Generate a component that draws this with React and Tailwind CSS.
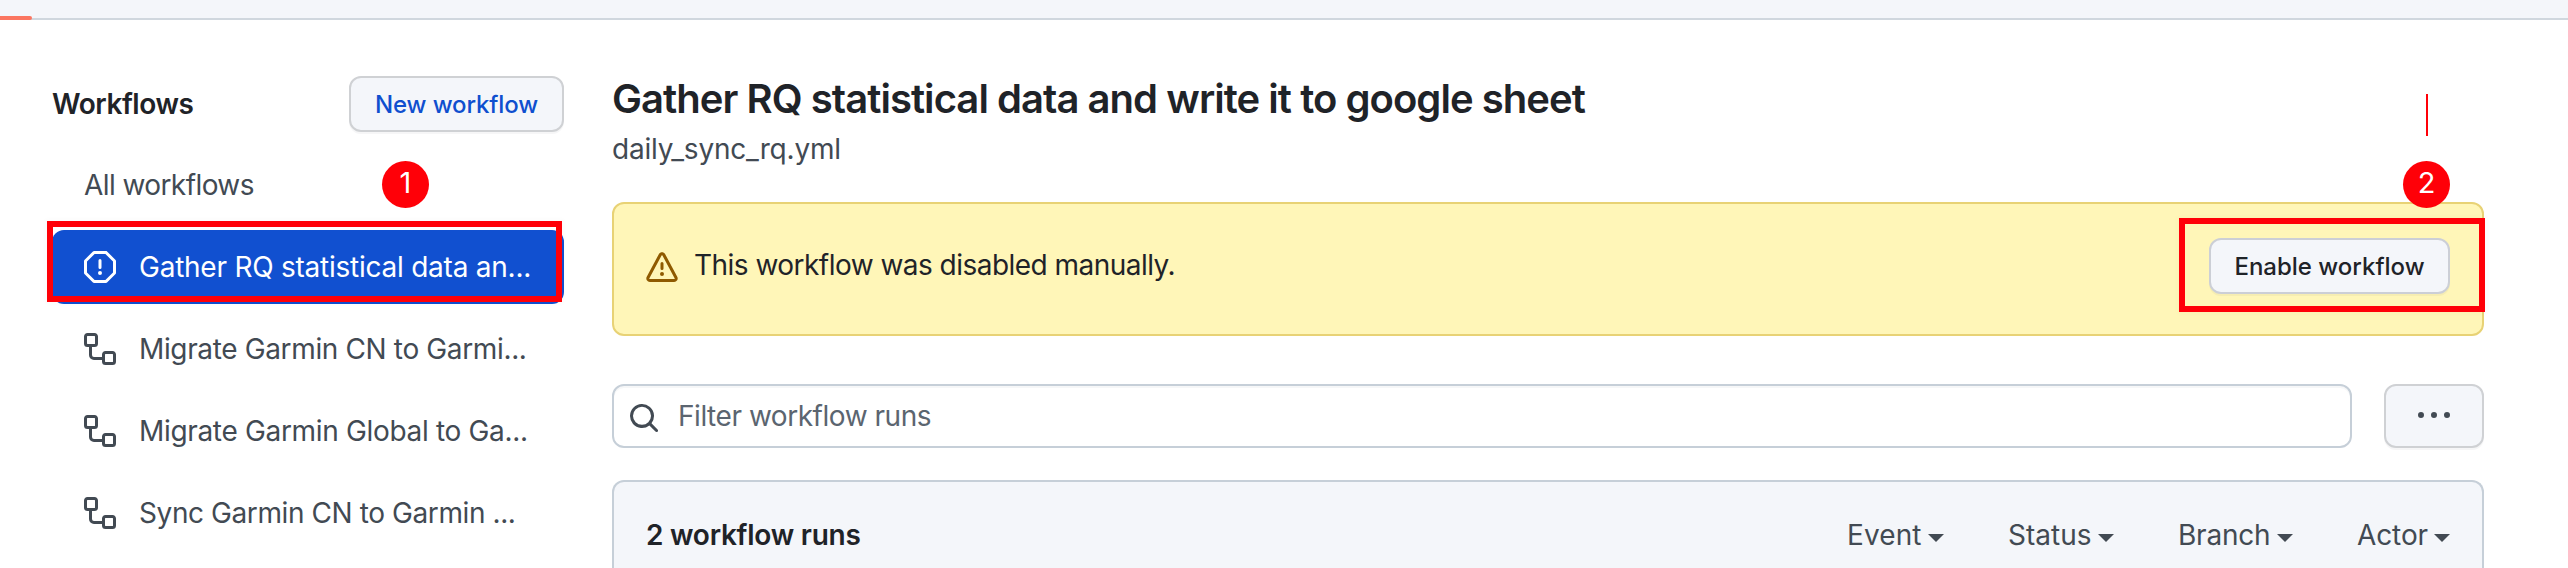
const ICONS = {
  stop: "M4.47.22A.749.749 0 0 1 5 0h6c.199 0 .389.079.53.22l4.25 4.25c.141.14.22.331.22.53v6a.749.749 0 0 1-.22.53l-4.25 4.25A.749.749 0 0 1 11 16H5a.749.749 0 0 1-.53-.22L.22 11.53A.749.749 0 0 1 0 11V5c0-.199.079-.389.22-.53Zm.84 1.28L1.5 5.31v5.38l3.81 3.81h5.38l3.81-3.81V5.31L10.69 1.5ZM8 4a.75.75 0 0 1 .75.75v3.5a.75.75 0 0 1-1.5 0v-3.5A.75.75 0 0 1 8 4Zm0 8a1 1 0 1 1 0-2 1 1 0 0 1 0 2Z",
  workflow: "M0 1.75C0 .784.784 0 1.75 0h3.5C6.216 0 7 .784 7 1.75v3.5A1.75 1.75 0 0 1 5.25 7H4v4a1 1 0 0 0 1 1h4v-1.25C9 9.784 9.784 9 10.75 9h3.5c.966 0 1.75.784 1.75 1.75v3.5A1.75 1.75 0 0 1 14.25 16h-3.5A1.75 1.75 0 0 1 9 14.25v-.75H5A2.5 2.5 0 0 1 2.5 11V7h-.75A1.75 1.75 0 0 1 0 5.25Zm1.75-.25a.25.25 0 0 0-.25.25v3.5c0 .138.112.25.25.25h3.5a.25.25 0 0 0 .25-.25v-3.5a.25.25 0 0 0-.25-.25Zm9 9a.25.25 0 0 0-.25.25v3.5c0 .138.112.25.25.25h3.5a.25.25 0 0 0 .25-.25v-3.5a.25.25 0 0 0-.25-.25Z",
  alert: "M6.457 1.047c.659-1.234 2.427-1.234 3.086 0l6.082 11.378A1.75 1.75 0 0 1 14.082 15H1.918a1.75 1.75 0 0 1-1.543-2.575Zm1.763.707a.25.25 0 0 0-.44 0L1.698 13.132a.25.25 0 0 0 .22.368h12.164a.25.25 0 0 0 .22-.368Zm.53 3.996v2.5a.75.75 0 0 1-1.5 0v-2.5a.75.75 0 0 1 1.5 0ZM9 11a1 1 0 1 1-2 0 1 1 0 0 1 2 0Z",
  search: "M10.68 11.74a6 6 0 0 1-7.922-8.982 6 6 0 0 1 8.982 7.922l3.04 3.04a.749.749 0 0 1-.326 1.275.749.749 0 0 1-.734-.215ZM11.5 7a4.499 4.499 0 1 0-8.997 0A4.499 4.499 0 0 0 11.5 7Z",
  kebab: "M8 9a1.5 1.5 0 1 0 0-3 1.5 1.5 0 0 0 0 3ZM1.5 9a1.5 1.5 0 1 0 0-3 1.5 1.5 0 0 0 0 3Zm13 0a1.5 1.5 0 1 0 0-3 1.5 1.5 0 0 0 0 3Z",
};

function Icon({ name, className = "" }) {
  return (
    <svg viewBox="0 0 16 16" fill="currentColor" className={`size-8 shrink-0 ${className}`}>
      <path d={ICONS[name]} />
    </svg>
  );
}

const ITEMS = [
  { label: "Gather RQ statistical data an...", icon: "stop", selected: true, spacing: "tracking-[-0.24px]" },
  { label: "Migrate Garmin CN to Garmi...", icon: "workflow", spacing: "tracking-[-0.36px]" },
  { label: "Migrate Garmin Global to Ga...", icon: "workflow", spacing: "tracking-[-0.33px]" },
  { label: "Sync Garmin CN to Garmin ...", icon: "workflow", spacing: "tracking-[-0.41px]" },
];

const FILTERS = [
  { label: "Event", box: "w-[97px]", spacing: "tracking-[0.1px]" },
  { label: "Status", box: "w-[106px]", spacing: "" },
  { label: "Branch", box: "w-[115px]", spacing: "tracking-[-0.2px]" },
  { label: "Actor", box: "w-[93px]", spacing: "tracking-[-0.1px]" },
];

function Sidebar() {
  return (
    <aside className="ml-[52px] w-[512px] shrink-0 pt-14">
      <div className="flex h-14 items-center justify-between">
        <h2 className="text-[28px] leading-9 font-semibold tracking-[-0.45px] text-[#1f2328]">Workflows</h2>
        <button className="h-14 w-[215px] rounded-xl border-2 border-[#cfd1d4] bg-[#f4f6fa] pt-px text-[24px] font-medium tracking-[-0.1px] text-[#0f4fcf] shadow-[0_2px_0_rgba(31,35,40,0.04)]">
          New workflow
        </button>
      </div>
      <nav className="mt-4">
        <div className="flex h-[74px] items-center pl-8 text-[28px] tracking-[-0.58px] text-[#424a53]">All workflows</div>
        {ITEMS.map((item) => (
          <div
            key={item.label}
            className={
              item.selected
                ? "mt-2 flex h-[74px] items-center gap-[23px] rounded-xl bg-[#1150d0] pl-8 text-white"
                : "mt-2 flex h-[74px] items-center gap-[23px] rounded-xl pl-8 text-[#424a53]"
            }
          >
            <Icon name={item.icon} />
            <span className={`text-[28px] leading-9 whitespace-nowrap ${item.spacing}`}>{item.label}</span>
          </div>
        ))}
      </nav>
    </aside>
  );
}

function Main() {
  return (
    <main className="ml-12 w-[1872px] pt-[53px]">
      <h1 className="text-[40px] leading-[52px] font-semibold tracking-[-0.95px] whitespace-nowrap text-[#1f2328]">
        Gather RQ statistical data and write it to google sheet
      </h1>
      <p className="mt-1.5 text-[28px] leading-9 tracking-[-0.18px] text-[#424a53]">daily_sync_rq.yml</p>

      <section className="mt-[35px] flex h-[134px] items-center rounded-xl border-2 border-[#e8d275] bg-[#fff6b8] pr-8 pl-8">
        <Icon name="alert" className="mt-[-2px] text-[#8f5a00]" />
        <span className="-mt-2 ml-4 text-[28px] leading-9 tracking-[-0.53px] text-[#1f2328]">
          This workflow was disabled manually.
        </span>
        <button className="-mt-1.5 ml-auto h-14 w-[241px] rounded-xl border-2 border-[#cccfd6] bg-[#f4f6fa] pt-px text-[24px] font-medium text-[#1f2328] shadow-[0_2px_0_rgba(31,35,40,0.04)]">
          Enable workflow
        </button>
      </section>

      <div className="mt-12 flex justify-between">
        <label className="flex h-16 w-[1740px] items-center gap-[18px] rounded-xl border-2 border-[#c6cfd8] bg-white pl-3.5 shadow-[inset_0_2px_0_rgba(208,215,222,0.2)]">
          <Icon name="search" className="mt-1 text-[#424a53]" />
          <span className="text-[28px] leading-9 tracking-[-0.46px] text-[#5b6570]">Filter workflow runs</span>
        </label>
        <button className="flex h-16 w-[100px] items-center justify-center rounded-xl border-2 border-[#cfd1d4] bg-[#f4f6fa] text-[#424a53] shadow-[0_2px_0_rgba(31,35,40,0.04)]">
          <Icon name="kebab" />
        </button>
      </div>

      <section className="mt-8 flex h-[120px] items-start justify-between rounded-t-xl border-2 border-b-0 border-[#c6cfd8] bg-[#f4f6fa] pt-[35px] pr-8 pl-8">
        <h3 className="text-[28px] leading-9 font-semibold tracking-[-0.25px] text-[#1f2328]">2 workflow runs</h3>
        <div className="flex gap-[64px] text-[28px] leading-9 text-[#424a53]">
          {FILTERS.map((f) => (
            <div key={f.label} className={`flex items-center justify-between ${f.box}`}>
              <span className={f.spacing}>{f.label}</span>
              <svg viewBox="0 0 16 8" fill="currentColor" className="mt-1.5 h-2 w-4">
                <path d="M0 0h16L8 8Z" />
              </svg>
            </div>
          ))}
        </div>
      </section>
    </main>
  );
}

function Marker({ children, className }) {
  return (
    <div className={`absolute flex size-[47px] items-center justify-center rounded-full bg-[#ff0008] pb-1 text-[29px] leading-none text-white ${className}`}>
      {children}
    </div>
  );
}

export default function App() {
  return (
    <div className="relative h-[568px] w-[2568px] overflow-hidden bg-white font-['Inter',sans-serif]">
      <header className="flex h-5 items-end border-b-2 border-[#d0d7de] bg-[#f4f6fa]">
        <div className="-mb-0.5 h-1 w-8 rounded-r-sm bg-[#fb7661]" />
      </header>
      <div className="flex">
        <Sidebar />
        <Main />
      </div>

      <div className="absolute top-[221px] left-[47px] h-[81px] w-[515px] border-6 border-[#ff0008] shadow-[0_0_4px_2px_rgba(0,0,0,0.02)]" />
      <div className="absolute top-[218px] left-[2179px] h-[94px] w-[306px] border-6 border-[#ff0008] shadow-[0_0_4px_2px_rgba(0,0,0,0.02)]" />
      <div className="absolute top-[94px] left-[2426px] h-[42px] w-0.5 bg-[#ff0008]" />
      <Marker className="top-[161px] left-[382px]">1</Marker>
      <Marker className="top-[161px] left-[2403px]">2</Marker>
    </div>
  );
}
